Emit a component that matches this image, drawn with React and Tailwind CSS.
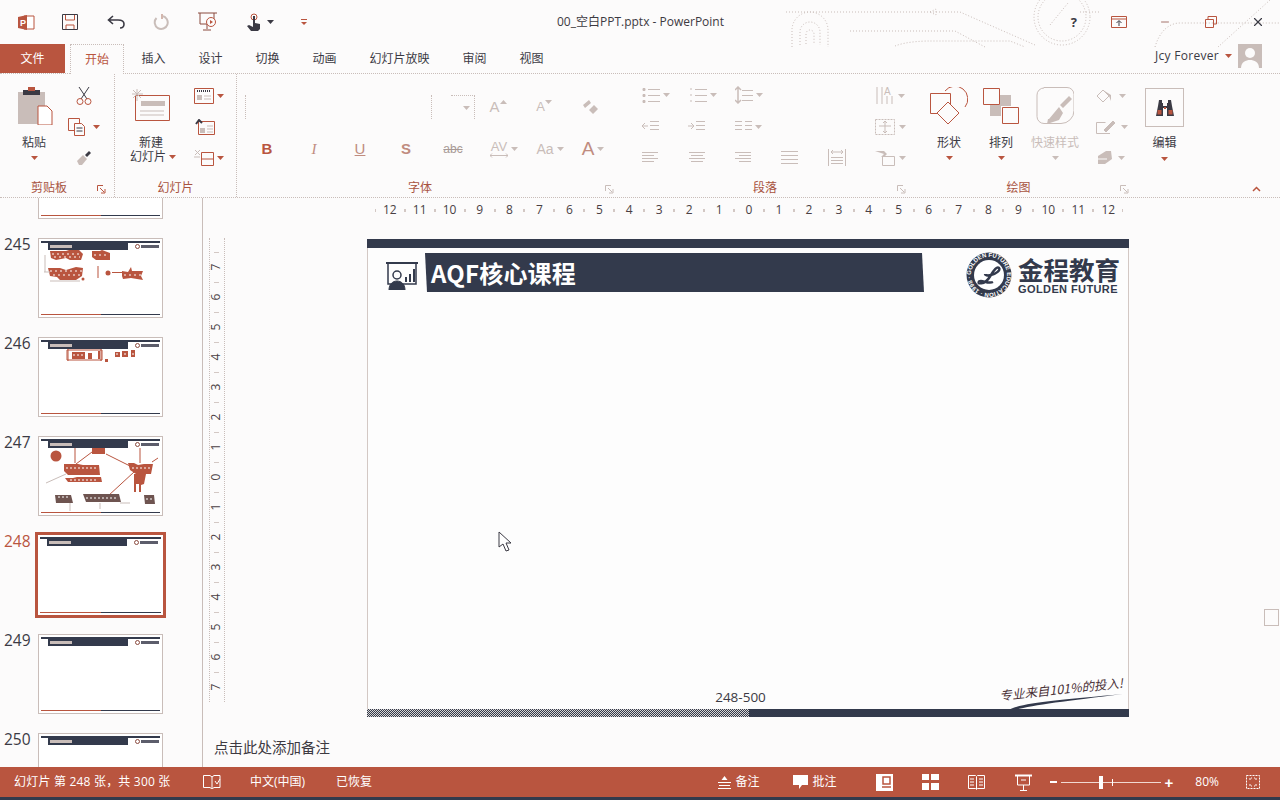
import { Minus, X } from "lucide-react";

const ACCENT = "#b9553f";
const DARK = "#333a4c";
const LINE = "#c9bdb9";

function Caret({ color = ACCENT, className = "" }) {
    return (
        <svg width="7" height="4" viewBox="0 0 7 4" className={className}>
            <path d="M0 0h7L3.5 4z" fill={color} />
        </svg>
    );
}

function Icon({ w = 16, h = 16, children }) {
    return (
        <svg width={w} height={h} viewBox={`0 0 ${w} ${h}`} fill="none" stroke={LINE} strokeWidth="1" className="shrink-0">
            {children}
        </svg>
    );
}

function Lines({ x = 0, y = 0, w = 14, n = 3, gap = 4, stroke = LINE }) {
    const rows = [];
    for (let i = 0; i < n; i++) rows.push(<path key={i} d={`M${x} ${y + i * gap + 0.5}h${w}`} stroke={stroke} />);
    return <>{rows}</>;
}

function Large({ width, icon, label, second, caret = true, dim = false }) {
    return (
        <div className="flex flex-col items-center shrink-0" style={{ width }}>
            <div className="h-[50px] flex items-center justify-center pt-[1px]">{icon}</div>
            <div className={`h-[24px] pt-[1px] leading-[24px] text-[12px] ${dim ? "text-[#c9bdb9]" : "text-[#3b3a44]"}`}>{label}</div>
            {second ? (
                <div className="h-[14px] -mt-[4px] leading-[14px] text-[12px] text-[#3b3a44] flex items-center gap-[3px] ml-[4px]">
                    {second}
                    <Caret />
                </div>
            ) : (
                caret && (
                    <div className="h-[8px] flex items-center">
                        <Caret color={dim ? LINE : ACCENT} />
                    </div>
                )
            )}
        </div>
    );
}

function Small({ children, caret, caretColor = LINE, gap = "gap-[4px]" }) {
    return (
        <div className={`h-[32px] flex items-center justify-center ${gap}`}>
            {children}
            {caret && <Caret color={caretColor} />}
        </div>
    );
}

function Launcher({ color = LINE }) {
    return (
        <svg width="9" height="9" viewBox="0 0 9 9" fill="none" stroke={color}>
            <path d="M.5 6V.5H6M3 3l4 4M4 8h4V4" />
        </svg>
    );
}

function Group({ width, children, label, labelClass = "", launcher, launcherClass = "right-[1px]", launcherColor, divider = true }) {
    return (
        <div className={`shrink-0 h-full flex flex-col ${divider ? "border-r border-dotted border-[#c9bdb9]" : ""}`} style={{ width }}>
            <div className="flex-1 flex pt-[6px] min-h-0">{children}</div>
            <div className={`h-[24px] pt-[6px] relative flex items-center justify-center text-[12px] text-[#a8533f] ${labelClass}`}>
                {label}
                {launcher && (
                    <span className={`absolute top-[12px] ${launcherClass}`}>
                        <Launcher color={launcherColor} />
                    </span>
                )}
            </div>
        </div>
    );
}

// dotted circuit drawing behind the title bar
function TitleBarArt() {
    return (
        <svg width="500" height="74" viewBox="0 0 500 74" fill="none" stroke="#c9bdb9" strokeDasharray="1 2" className="absolute right-0 top-0 pointer-events-none">
            <path d="M6 12H180L255 45" />
            <path d="M70 31H175L205 47" />
            <path d="M115 46C125 42 140 41 150 41H230L245 47" />
            <path d="M12 47V30a18 18 0 0 1 36 0V47M20 45V32a10 10 0 0 1 20 0V45M26 44V34a4 4 0 0 1 8 0V44" />
            <circle cx="282" cy="17" r="28" />
            <circle cx="282" cy="17" r="24" />
            <path d="M270 25L288 3" />
            <path d="M375 47C380 30 390 23 400 23H500" />
            <path d="M438 47L490 0" />
            <path d="M150 12l6-3v6zM300 12H320" />
        </svg>
    );
}

function QuickIcons() {
    return (
        <div className="flex items-center">
            <svg width="17" height="15" viewBox="0 0 17 15" className="ml-[18px]">
                <path d="M6 1h10v13H6z" fill="#fff" stroke={ACCENT} />
                <path d="M0 2l9-2v15l-9-2z" fill={ACCENT} />
                <text x="2" y="11" fontSize="9" fontWeight="700" fill="#fff" fontFamily="Liberation Sans, sans-serif">P</text>
            </svg>
            <svg width="16" height="16" viewBox="0 0 16 16" className="ml-[27px]" fill="none" stroke="#3b3a44">
                <path d="M.5.5h15v15H.5z" />
                <path d="M3.5 1v5h9V1M4 15v-4h8v4" stroke={ACCENT} />
            </svg>
            <svg width="19" height="14" viewBox="0 0 19 14" className="ml-[29px]" fill="none" stroke="#3b3a44" strokeWidth="1.6">
                <path d="M6 1L1.500 5 6 9M2 5h9c4 0 6 2 6 4s-1 4-4 4" />
            </svg>
            <svg width="16" height="16" viewBox="0 0 16 16" className="ml-[27px]" fill="none" stroke={LINE} strokeWidth="2">
                <path d="M9 2a6.500 6.500 0 1 1-5.500 2" />
                <path d="M9 0v5" stroke="#d3b6ad" />
            </svg>
            <svg width="20" height="20" viewBox="0 0 20 20" className="ml-[29px]" fill="none" stroke="#8a4a3f">
                <path d="M0 1h19M2 1v11h14V1M9 12v5M5 18h8" />
                <circle cx="13" cy="10" r="4.500" stroke={ACCENT} fill="#fcfbfb" />
                <path d="M12 8l3 2-3 2z" fill={ACCENT} stroke="none" />
            </svg>
            <svg width="14" height="18" viewBox="0 0 14 18" className="ml-[29px]">
                <circle cx="7" cy="4" r="3" fill="none" stroke={ACCENT} />
                <path d="M6 3h2v7l5 1v5l-2 2H4l-4-5 2-1 4 2z" fill="#3b3a44" />
            </svg>
            <Caret color="#3b3a44" className="ml-[6px]" />
            <svg width="7" height="7" viewBox="0 0 7 7" className="ml-[27px]">
                <path d="M0 .5h6" stroke={ACCENT} />
                <path d="M0 3h6L3 6z" fill={ACCENT} />
            </svg>
        </div>
    );
}

function WindowButtons() {
    return (
        <div className="flex items-center text-[#3b3a44]">
            <span className="text-[13px] font-bold leading-none text-[#3b3a44]">?</span>
            <svg width="16" height="12" viewBox="0 0 16 12" className="ml-[34px]" fill="none" stroke={ACCENT}>
                <path d="M.5.5h15v11H.5zM1 3h14" />
                <path d="M8 10V5M5.500 7L8 4.500 10.500 7" stroke="#3b3a44" />
            </svg>
            <Minus size={12} strokeWidth={1.5} className="ml-[32px]" color="#8a4a3f" />
            <svg width="12" height="12" viewBox="0 0 12 12" className="ml-[34px]" fill="none" stroke={ACCENT}>
                <path d="M3 3V.5h8.500V8H9M.5 3.500h8v8h-8z" />
            </svg>
            <X size={14} strokeWidth={2} className="ml-[34px] mr-[15px]" color="#3b3a44" />
        </div>
    );
}

function TitleBar() {
    return (
        <div className="h-[44px] relative flex items-center justify-between">
            <TitleBarArt />
            <div className="flex-1">
                <QuickIcons />
            </div>
            <div className="absolute left-0 right-0 top-0 h-[44px] flex items-center justify-center text-[12px] text-[#3d3a42] pl-[1px]">00_空白PPT.pptx - PowerPoint</div>
            <div className="relative">
                <WindowButtons />
            </div>
        </div>
    );
}

const TABS = [
    ["插入", 57],
    ["设计", 57],
    ["切换", 57],
    ["动画", 57],
    ["幻灯片放映", 93],
    ["审阅", 57],
    ["视图", 57],
];

function TabRow() {
    return (
        <div className="h-[30px] flex items-stretch relative border-b border-dotted border-[#c9bdb9] text-[12px]">
            <div className="w-[65px] bg-[#b9553f] text-white flex items-center justify-center">文件</div>
            <div className="w-[54px] ml-[5px] -mb-px bg-[#fcfbfb] border border-b-0 border-dotted border-[#c9bdb9] text-[#b9553f] flex items-center justify-center">开始</div>
            <div className="flex ml-[1px] text-[#3b3a44]">
                {TABS.map(([t, w]) => (
                    <div key={t} className="flex items-center justify-center" style={{ width: w }}>{t}</div>
                ))}
            </div>
            <div className="absolute right-[18px] -top-[3px] h-full flex items-center">
                <span className="text-[12px] text-[#3b3a44] tracking-[0.3px]">Jcy Forever</span>
                <Caret className="ml-[6px]" />
                <svg width="24" height="24" viewBox="0 0 24 24" className="ml-[6px]">
                    <rect width="24" height="24" fill="#c9bdb9" />
                    <circle cx="12" cy="9" r="5" fill="#fcfbfb" />
                    <path d="M3 24c0-6 5-8 9-8s9 2 9 8z" fill="#fcfbfb" />
                </svg>
            </div>
        </div>
    );
}

function ClipboardGroup() {
    return (
        <>
            <Large
                width={68}
                label="粘贴"
                icon={
                    <svg width="35" height="38" viewBox="0 0 35 38" className="ml-[3px]">
                        <path d="M0 5h27v32H0z" fill="#c9bdb9" />
                        <path d="M5 3h17v5H5z" fill="#3b3a44" />
                        <path d="M10 0h7v4h-7z" fill={ACCENT} />
                        <path d="M20 19h9l5 5v14H20z" fill="#fff" stroke={ACCENT} />
                    </svg>
                }
            />
            <div className="w-[46px] flex flex-col ml-[-7px]">
                <Small>
                    <svg width="16" height="18" viewBox="0 0 16 18" fill="none" stroke={ACCENT}>
                        <path d="M3 0l8 12M13 0L5 12" stroke="#3b3a44" />
                        <circle cx="4" cy="14.500" r="3" />
                        <circle cx="12" cy="14.500" r="3" />
                    </svg>
                </Small>
                <Small caret caretColor={ACCENT} gap="gap-[7px]">
                    <svg width="18" height="18" viewBox="0 0 18 18" fill="#fcfbfb" stroke={ACCENT}>
                        <path d="M.5.5h11v12H.5z" />
                        <path d="M6.500 5.500h7l3 3v9h-10z" />
                        <path d="M8.500 10h6M8.500 13h6" stroke="#3b3a44" />
                    </svg>
                </Small>
                <Small>
                    <svg width="16" height="16" viewBox="0 0 16 16">
                        <path d="M1 11l6-6 4 4-5 6H3z" fill="#c9bdb9" />
                        <path d="M9 5l4-4 2 2-4 4z" fill="#3b3a44" />
                    </svg>
                </Small>
            </div>
        </>
    );
}

function SlidesGroup() {
    return (
        <>
            <Large
                width={72}
                label="新建"
                second="幻灯片"
                icon={
                    <svg width="38" height="34" viewBox="0 0 38 34" fill="none">
                        <path d="M3.500 6.500h34v25h-34z" stroke={ACCENT} />
                        <path d="M9 12h24v5H9z" fill="#c9bdb9" />
                        <path d="M8 22h24M8 26h24" stroke="#c9bdb9" />
                        <path d="M5 0v12M0 5h11M1 1l8 8M9 1L1 9" stroke="#c9bdb9" />
                    </svg>
                }
            />
            <div className="w-[50px] flex flex-col ml-[-7px] pl-[8px]">
                <Small caret caretColor={ACCENT} gap="gap-[3px]">
                    <svg width="20" height="16" viewBox="0 0 20 16" fill="none" stroke={ACCENT}>
                        <path d="M.5.5h19v15H.5z" />
                        <path d="M3 3h14" stroke="#3b3a44" strokeWidth="2" strokeDasharray="1 1" />
                        <path d="M3 7h5v5H3z" fill="#c9bdb9" stroke="none" />
                        <path d="M10 8h7M10 11h7" stroke="#c9bdb9" />
                    </svg>
                </Small>
                <Small>
                    <svg width="20" height="16" viewBox="0 0 20 16" fill="none" stroke={ACCENT} className="mr-[9px]">
                        <path d="M3.500 2.500h16v13H3.500z" />
                        <path d="M5 9h5v5H5z" fill="#c9bdb9" stroke="none" />
                        <path d="M12 7h6M12 10h6M12 13h6" stroke="#c9bdb9" />
                        <path d="M1 5l3-4 3 3" stroke="#3b3a44" strokeWidth="2" />
                    </svg>
                </Small>
                <Small caret caretColor={ACCENT} gap="gap-[3px]">
                    <svg width="20" height="17" viewBox="0 0 20 17" fill="none">
                        <path d="M7.500 3.500h12v13h-12zM8 10h11" stroke={ACCENT} />
                        <path d="M1 1l5 5M6 1L1 6M0 8h6" stroke="#c9bdb9" />
                    </svg>
                </Small>
            </div>
        </>
    );
}

function FontLetter({ children, w, className = "", caret }) {
    return (
        <div className={`flex items-center justify-center gap-[3px] shrink-0 ${caret ? "pl-[10px]" : ""} ${className}`} style={{ width: w }}>
            {children}
            {caret && <Caret color={LINE} />}
        </div>
    );
}

function FontGroup() {
    return (
        <div className="flex flex-col w-full font-['Liberation_Sans',sans-serif]">
            <div className="h-[44px] flex pt-[10px] items-center pl-[8px] text-[#c9bdb9]">
                <span className="w-[187px] h-[24px] border-x border-dotted border-[#c9bdb9]" />
                <span className="w-[24px] h-[24px] ml-[19px] border-t border-r border-dotted border-[#c9bdb9] flex items-center justify-end pr-[4px]">
                    <Caret color={LINE} />
                </span>
                <FontLetter w={46} className="text-[15px]">
                    A<Caret color={LINE} className="mb-[10px] -ml-[3px] rotate-180" />
                </FontLetter>
                <FontLetter w={46} className="text-[13px]">
                    A<Caret color={LINE} className="mb-[10px] -ml-[3px]" />
                </FontLetter>
                <svg width="18" height="18" viewBox="0 0 18 18" className="ml-[14px]">
                    <path d="M2 7l6-5 2 3-6 5zM8 12l5-5 4 4-5 5z" fill="#c9bdb9" />
                </svg>
            </div>
            <div className="h-[32px] mt-[9px] flex items-center text-[15px] text-[#c9bdb9] pl-[7px]">
                <FontLetter w={46} className="font-bold text-[#b9553f]">B</FontLetter>
                <FontLetter w={48} className="italic font-['Liberation_Serif',serif] text-[#c08c7f]">I</FontLetter>
                <FontLetter w={44} className="underline text-[#c08c7f]">U</FontLetter>
                <FontLetter w={48} className="font-bold text-[#c08c7f]">S</FontLetter>
                <FontLetter w={46} className="line-through text-[12px] text-[#a89a96]">abc</FontLetter>
                <FontLetter w={46} className="text-[13px]" caret>
                    <span className="flex flex-col items-center leading-[12px]">
                        AV
                        <svg width="18" height="5" viewBox="0 0 18 5" fill="none" stroke={LINE}>
                            <path d="M0 2.500h18M2 .5L0 2.500l2 2M16 .5l2 2-2 2" />
                        </svg>
                    </span>
                </FontLetter>
                <FontLetter w={46} className="text-[14px]" caret>Aa</FontLetter>
                <FontLetter w={40} className="text-[19px] text-[#c08c7f]" caret>A</FontLetter>
            </div>
        </div>
    );
}

function ParagraphGroup() {
    const listIcon = (num) => (
        <Icon w={18} h={16}>
            <path d={num ? "M1 2h2M1 8h2M1 14h2" : "M1 1.500h2v2H1zM1 7.500h2v2H1zM1 13.500h2v2H1z"} fill={LINE} />
            <Lines x={6} y={2} w={12} gap={6} />
        </Icon>
    );
    const alignIcon = (x1, w1) => (
        <Icon w={16} h={11}>
            <path d={`M0 .5h16M${x1} 3.500h${w1}M0 6.500h16M${x1} 9.500h${w1}`} />
        </Icon>
    );
    return (
        <div className="flex flex-col w-full pl-[27px]">
            <div className="h-[32px] mt-[-1px] flex items-center">
                <div className="w-[47px] flex items-center gap-[3px]">{listIcon(false)}<Caret color={LINE} /></div>
                <div className="w-[46px] flex items-center gap-[3px]">{listIcon(true)}<Caret color={LINE} /></div>
                <div className="flex items-center gap-[3px]">
                    <Icon w={18} h={18}>
                        <path d="M3 1v16M0 4l3-3 3 3M0 14l3 3 3-3" strokeWidth="1.5" />
                        <Lines x={7} y={4} w={11} gap={5} />
                    </Icon>
                    <Caret color={LINE} />
                </div>
            </div>
            <div className="h-[32px] mt-[1px] flex items-center">
                <div className="w-[46px]">
                    <Icon w={17} h={12}>
                        <path d="M8 .5h9M8 4.500h9M8 8.500h9M0 5h6M3 2L0 5l3 3" />
                    </Icon>
                </div>
                <div className="w-[47px]">
                    <Icon w={17} h={12}>
                        <path d="M8 .5h9M8 4.500h9M8 8.500h9M0 5h6M3 2l3 3-3 3" />
                    </Icon>
                </div>
                <div className="flex items-center gap-[3px]">
                    <Icon w={17} h={12}>
                        <path d="M0 .5h7M10 .5h7M0 4.500h7M10 4.500h7M0 8.500h7M10 8.500h7" />
                    </Icon>
                    <Caret color={LINE} />
                </div>
            </div>
            <div className="h-[32px] flex items-center">
                <div className="w-[47px]">{alignIcon(0, 12)}</div>
                <div className="w-[46px]">{alignIcon(2, 12)}</div>
                <div className="w-[46px]">{alignIcon(4, 12)}</div>
                <div className="w-[47px]">
                    <Icon w={17} h={15}>
                        <Lines y={1} w={17} n={4} gap={4} />
                    </Icon>
                </div>
                <Icon w={18} h={17}>
                    <path d="M.5 0v17M17.500 0v17M4 3h10M5 1L3 3l2 2M13 1l2 2-2 2" />
                    <Lines x={3} y={8} w={12} gap={3} />
                </Icon>
            </div>
        </div>
    );
}

function DrawingGroup() {
    return (
        <>
            <div className="w-[52px] shrink-0 flex flex-col items-start pl-[4px] ml-[-36px]">
                <Small caret>
                    <Icon w={19} h={20}>
                        <path d="M2 1v17M7 1v17M12 10v8M17 10v8" />
                        <text x="9" y="9" fontSize="10" fill={LINE} stroke="none" fontFamily="Liberation Sans, sans-serif">A</text>
                    </Icon>
                </Small>
                <Small caret>
                    <Icon w={20} h={16}>
                        <path d="M.5.5h19v15H.5z" strokeDasharray="2 1" />
                        <path d="M10 2v12M8 4l2-2 2 2M8 12l2 2 2-2M4 7h12" />
                    </Icon>
                </Small>
                <Small caret>
                    <Icon w={20} h={16}>
                        <path d="M0 1h9l3 3-3 3 3 0H6l3-3z" fill={LINE} stroke="none" />
                        <path d="M7.500 6.500h12v9h-12z" />
                    </Icon>
                </Small>
            </div>
            <Large
                width={52}
                label="形状"
                icon={
                    <svg width="38" height="38" viewBox="0 0 38 38" fill="none" stroke={ACCENT}>
                        <path d="M15 4a12 12 0 1 1 20 16" />
                        <path d="M.5 6.500h20v20H.5z" />
                        <path d="M18 15l11 11-11 11L7 26z" fill="#fcfbfb" />
                    </svg>
                }
            />
            <Large
                width={52}
                label="排列"
                icon={
                    <svg width="36" height="36" viewBox="0 0 36 36" fill="none" stroke={ACCENT}>
                        <path d="M17 7h11v11H17zM7 17h11v11H7z" fill="#c9bdb9" stroke="none" />
                        <path d="M.5.5h16v16H.5zM19.500 19.500h16v16h-16z" fill="#fcfbfb" />
                    </svg>
                }
            />
            <Large
                width={56}
                label="快速样式"
                dim
                icon={
                    <svg width="38" height="38" viewBox="0 0 38 38" fill="none" stroke={LINE}>
                        <path d="M8 .5h23a7 7 0 0 1 7 7v16a13 13 0 0 1-13 13H8a7 7 0 0 1-7-7V8a7 7 0 0 1 7-7z" fill="#fcfbfb" />
                        <path d="M36 12l-9 9-3-3 9-9zM23 20l-10 12H12l-1 5 12-4 4-7z" fill={LINE} stroke="none" />
                    </svg>
                }
            />
            <div className="w-[44px] shrink-0 flex flex-col items-start pl-[13px]">
                <Small caret gap="gap-[8px]">
                    <svg width="15" height="16" viewBox="0 0 15 16">
                        <path d="M1 8l6-6 6 6-6 6z" fill="none" stroke={LINE} />
                        <path d="M7 2l6 6 2 5V7z" fill={LINE} />
                    </svg>
                </Small>
                <Small caret gap="gap-[5px]">
                    <svg width="20" height="15" viewBox="0 0 20 15" fill="none" stroke={LINE}>
                        <path d="M14 14.500H.5v-11h9" />
                        <path d="M8 11l9-9 2 2-9 9z" fill={LINE} />
                    </svg>
                </Small>
                <Small caret gap="gap-[5px]">
                    <svg width="17" height="15" viewBox="0 0 17 15">
                        <path d="M2 6l8-5h5l1 8-7 5H2z" fill={LINE} />
                        <path d="M1 9l10 0" stroke="#fcfbfb" />
                    </svg>
                </Small>
            </div>
        </>
    );
}

function EditGroup() {
    return (
        <div className="pl-[15px] flex flex-col items-center w-[54px]">
            <div className="w-[39px] h-[39px] mt-[8px] border border-[#c9bdb9] flex items-center justify-center">
                <svg width="18" height="16" viewBox="0 0 18 16">
                    <path d="M3 0h3v3h1v3h4V3h1V0h3l1 6 2 10h-7V8H7v8H0l2-10z" fill="#3b3a44" />
                    <path d="M1.500 10h4v4.500h-4zM12.500 10h4v4.500h-4z" fill={ACCENT} />
                    <path d="M8 7h2v2H8z" fill={ACCENT} />
                </svg>
            </div>
            <div className="h-[24px] leading-[24px] mt-[4px] text-[12px] text-[#3b3a44] whitespace-nowrap">编辑</div>
            <div className="h-[8px] flex items-center">
                <Caret />
            </div>
        </div>
    );
}

function Ribbon() {
    return (
        <div className="h-[124px] flex border-b border-dotted border-[#c9bdb9] relative">
            <Group width={115} label="剪贴板" labelClass="pr-[16px]" launcher launcherClass="right-[8px]" launcherColor={ACCENT}>
                <ClipboardGroup />
            </Group>
            <Group width={122} label="幻灯片">
                <SlidesGroup />
            </Group>
            <Group width={378} label="字体" labelClass="pr-[12px]" launcher divider={false}>
                <FontGroup />
            </Group>
            <Group width={292} label="段落" labelClass="pl-[8px]" launcher divider={false}>
                <ParagraphGroup />
            </Group>
            <Group width={223} label="绘图" launcher divider={false}>
                <DrawingGroup />
            </Group>
            <div className="flex-1 pt-[6px]">
                <EditGroup />
            </div>
            <svg width="9" height="6" viewBox="0 0 9 6" fill="none" stroke={ACCENT} strokeWidth="1.5" className="absolute right-[19px] bottom-[5px]">
                <path d="M1 5l3.500-3.500L8 5" />
            </svg>
        </div>
    );
}

// coarse copies of the tiny slide pictures; white dashes break the fills up like the reference
function ThumbBlobs({ kind }) {
    if (kind === 245) {
        return (
            <svg width="122" height="50" viewBox="0 0 122 50" fill={ACCENT} className="block">
                <path d="M10 1h16l3-1h10l4 4-2 6H30l-4-2-10 2-5-2zM52 1h8l2-1 8 3v7H56l-4-3z" />
                <path d="M8 18h12l6 2 10-3 7 1-1 8-6 4H20l-3-3-7-1zM82 21l6 1 3-5 1 4h11l-2 5 2 4-12-2-8 1-1-3z" />
                <circle cx="68" cy="23" r="2.500" />
                <circle cx="43" cy="29" r="1.500" />
                <path d="M57.500 16h1v12h-1zM72 22h10v1H72zM4 4v18" />
                <path d="M5 5v17M4 22h6M10 31h30" stroke={LINE} fill="none" />
                <path d="M12 4h30M14 7h26M54 5h14M10 21h32M13 25h28M84 25h18" stroke="#fff" strokeDasharray="2 3" fill="none" />
            </svg>
        );
    }
    if (kind === 246) {
        return (
            <svg width="122" height="50" viewBox="0 0 122 50" fill={ACCENT} className="block">
                <path d="M32 3h13v7H32zM48 4h4v6h-4zM58 2h2v8h-2zM65 10h3v3h-3zM75 3h5v5h-5zM82 2h6v6h-6zM91 1h4v7h-4z" />
                <path d="M27 1h35v10H27zM28 0v12M61 0v12" fill="none" stroke={ACCENT} />
                <path d="M33 6h11M76 5h18" stroke="#fff" strokeDasharray="2 2" fill="none" />
            </svg>
        );
    }
    if (kind === 247) {
        return (
            <svg width="122" height="66" viewBox="0 0 122 66" fill={ACCENT} className="block">
                <circle cx="16" cy="8" r="5.500" />
                <path d="M24 16h14l5 1h16l1 10H28l-4-4zM25 30h8l4-1h24l1 5H28zM52 0h13v6H52zM88 15h6l4 2 6-1 9 0-2 10H96l-6-4zM94 26h12l-2 10-3 1v7h-2v-8h-3v8h-2z" />
                <path d="M35 0v15M36 16L52 4M66 6l24 12M68 48l26-24M100 0v15M112 14l6-4" fill="none" stroke={ACCENT} />
                <path d="M15 47h16l2 8H16zM43 46h36l2 8H46zM104 47h10l1 9h-10z" fill="#6e5450" />
                <path d="M18 49h12M46 50h32M106 51h8M26 20h30M30 32h28M92 20h18" stroke="#fff" strokeDasharray="2 2" fill="none" />
                <path d="M6 35l20-9M30 55v8M60 55v6M80 55h10" stroke={LINE} fill="none" />
            </svg>
        );
    }
    return null;
}

function Thumb({ num, blobs, selected }) {
    return (
        <div className={`h-[80px] flex relative ${selected ? "text-[#b9553f]" : "text-[#3b3a44]"}`}>
            <div className="w-[38px] text-[15.5px] leading-[12px] pl-[4px] font-['Open_Sans',sans-serif]">{num}</div>
            <div className={`w-[125px] h-[80px] bg-white flex flex-col px-[1px] py-[1px] ${selected ? "outline-3 outline-[#b9553f]" : "border border-[#c9bdb9]"}`}>
                <div className="h-[2px] mt-[1px] mx-[1px] bg-[#333a4c]" />
                <div className="h-[7px] flex items-center">
                    <div className="h-[7px] w-[80px] ml-[8px] bg-[#333a4c] flex items-center pl-[2px]">
                        <div className="h-[3px] w-[22px] bg-[#c9bdb9]" />
                    </div>
                    <div className="w-[5px] h-[5px] ml-[7px] rounded-full border border-[#8a4a3f]" />
                    <div className="h-[3px] w-[18px] ml-[1px] bg-[#5c5d6b]" />
                </div>
                <div className="flex-1 min-h-0 overflow-hidden">
                    <ThumbBlobs kind={blobs} />
                </div>
                <div className="h-[1px] mb-[1px] mx-[1px] flex shrink-0">
                    <div className="w-1/2 bg-[#b9553f]" />
                    <div className="w-1/2 bg-[#333a4c]" />
                </div>
            </div>
        </div>
    );
}

function ThumbPanel() {
    return (
        <div className="w-[203px] shrink-0 h-full overflow-hidden border-r border-[#c9bdb9]">
            <div className="flex flex-col gap-[19px] mt-[-59px]">
                <Thumb />
                <Thumb num="245" blobs={245} />
                <Thumb num="246" blobs={246} />
                <Thumb num="247" blobs={247} />
                <Thumb num="248" selected />
                <Thumb num="249" />
                <Thumb num="250" />
            </div>
        </div>
    );
}

const HRULER = [12, 11, 10, 9, 8, 7, 6, 5, 4, 3, 2, 1, 0, 1, 2, 3, 4, 5, 6, 7, 8, 9, 10, 11, 12];
const VRULER = [7, 6, 5, 4, 3, 2, 1, 0, 1, 2, 3, 4, 5, 6, 7];

function TopRuler() {
    return (
        <div className="h-[16px] flex justify-center items-center text-[12px] text-[#4a3f44] font-['Open_Sans',sans-serif]">
            {HRULER.map((n, i) => (
                <div key={i} className="w-[29.95px] flex items-center justify-between">
                    <span className="w-[1px] h-[3px] bg-[#d3c8c4]" />
                    <span className="leading-[16px]">{n}</span>
                    <span className="w-[1px] h-[3px] bg-[#d3c8c4]" />
                </div>
            ))}
        </div>
    );
}

function SideRuler() {
    return (
        <div className="w-[26px] shrink-0 flex flex-col items-center pt-[40px] text-[12px] text-[#4a3f44] font-['Open_Sans',sans-serif]">
            <div className="w-[16px] flex flex-col items-center pt-[14px] border-x border-dotted border-[#c9bdb9] ml-[1px]">
                {VRULER.map((n, i) => (
                    <div key={i} className="h-[30px] flex flex-col justify-between items-center">
                        <span className="w-[5px] h-[1px] bg-[#d3c8c4]" />
                        <span className="-rotate-90 leading-none">{n}</span>
                        <span className="w-[5px] h-[1px] bg-transparent" />
                    </div>
                ))}
            </div>
        </div>
    );
}

function SlideLogo() {
    return (
        <div className="flex items-center gap-[6px] text-[#333a4c] -mt-[1px]">
            <svg width="46" height="46" viewBox="0 0 46 46" className="shrink-0">
                <circle cx="23" cy="23" r="22.500" fill={DARK} />
                <circle cx="23" cy="23" r="15" fill="#fff" />
                <defs>
                    <path id="ring" d="M23 23m-18 0a18 18 0 1 1 36 0a18 18 0 1 1-36 0" />
                </defs>
                <text fontSize="6" fontWeight="700" fill="#fff" fontFamily="Liberation Sans, sans-serif">
                    <textPath href="#ring">GOLDEN FUTURE EDUCATION · 1998 ·</textPath>
                </text>
                <path d="M14 31c4 1 8-3 11-8s6-9 8-7-3 6-8 7c-4 1-6 0-6-1M14 31c-2 1-2-2 1-2s8 3 12 1" fill="none" stroke={DARK} strokeWidth="2.500" />
            </svg>
            <div className="flex flex-col w-[102px]">
                <div className="text-[25.5px] leading-[28px] font-bold whitespace-nowrap font-['Noto_Sans_CJK_SC',sans-serif]">金程教育</div>
                <div className="text-[11px] leading-[13px] font-bold tracking-[0.4px] whitespace-nowrap font-['Liberation_Sans',sans-serif]">GOLDEN FUTURE</div>
            </div>
        </div>
    );
}

function Slide() {
    return (
        <div className="w-[762px] h-[478px] shrink-0 bg-[#fdfdfd] border-x border-[#d3c8c4] flex flex-col">
            <div className="h-[9px] bg-[#333a4c] -mx-px" />
            <div className="h-[48px] flex items-start pt-[5px]">
                <svg width="32" height="28" viewBox="0 0 32 28" className="ml-[18px] mt-[9px] shrink-0" fill="none" stroke={DARK}>
                    <path d="M0 1h32" strokeWidth="2" />
                    <path d="M2 2v20h28V2" strokeWidth="1.5" />
                    <circle cx="11" cy="13" r="4" strokeWidth="1.5" />
                    <path d="M3 28c0-6 4-9 8-9s8 3 8 9z" fill={DARK} />
                    <path d="M20 20v-5M24 20v-8M28 20V7" strokeWidth="2" />
                </svg>
                <div className="ml-[7px] w-[499px] h-[39px] bg-[#333a4c] [clip-path:polygon(0_0,99.6%_0,100%_100%,0.4%_100%)] text-white text-[24px] tracking-[0.2px] font-bold leading-[39px] pl-[6px] font-['Noto_Sans_CJK_SC',sans-serif]">
                    AQF核心课程
                </div>
                <div className="ml-[42px]">
                    <SlideLogo />
                </div>
            </div>
            <div className="flex-1" />
            <div className="h-[23px] relative flex items-center justify-center text-[13.5px] text-[#3b3a44] font-['Open_Sans',sans-serif] pr-[15px] pb-[1px]">
                248-500
                <div className="absolute right-[3px] bottom-[-3px] w-[128px] h-[34px]">
                    <div className="italic text-[12.5px] leading-[16px] whitespace-nowrap text-[#4a3036] -rotate-[6deg] pt-[3px] pl-[2px] font-['Noto_Sans_CJK_SC',sans-serif]">专业来自101%的投入!</div>
                    <svg width="128" height="20" viewBox="0 0 128 20" className="absolute left-0 bottom-0">
                        <path d="M11 18C24 11 60 8 126 2C70 9 35 13 18 18Z" fill={DARK} />
                    </svg>
                </div>
            </div>
            <div className="h-[8px] flex -mx-px">
                <div className="w-[382px] bg-[repeating-conic-gradient(#333a4c_0_25%,#d8d4d2_0_50%)] bg-[length:2px_2px]" />
                <div className="flex-1 bg-[#333a4c]" />
            </div>
        </div>
    );
}

function Cursor() {
    return (
        <svg width="14" height="21" viewBox="0 0 14 21" className="absolute left-[295px] top-[333px]">
            <path d="M1 1v15l4-3 3 7 3-1-3-7h5z" fill="#fff" stroke="#3b3a44" />
        </svg>
    );
}

function Editor() {
    return (
        <div className="flex-1 min-w-0 flex flex-col h-full relative">
            <div className="flex-1 min-h-0 flex">
                <SideRuler />
                <div className="flex-1 min-w-0 flex flex-col relative pr-[15px]">
                    <div className="pt-[4px] ml-[-2px] pl-[21px]">
                        <TopRuler />
                    </div>
                    <div className="flex justify-start pl-[138px] pt-[21px]">
                        <Slide />
                    </div>
                    <div className="flex-1" />
                </div>
                <div className="w-[15px] shrink-0 flex flex-col justify-start pt-[411px] -ml-px mr-px [background-image:linear-gradient(#fcfbfb,#fcfbfb),radial-gradient(circle_at_1px_1px,#dcd3d0_0.6px,transparent_0.7px)] [background-size:100%_330px,3px_3px] [background-repeat:no-repeat,repeat]">
                    <div className="h-[17px] border border-[#c9bdb9] bg-[#fcfbfb]" />
                </div>
            </div>
            <div className="h-[30px] shrink-0 flex items-center pl-[11px] pb-[8px] text-[14.5px] text-[#3d3a42]">点击此处添加备注</div>
            <Cursor />
        </div>
    );
}

function StatusBar() {
    return (
        <div className="h-[33px] shrink-0 bg-[#333a4c] text-[12px] text-white">
            <div className="h-[30px] bg-[#b9553f] flex items-center">
                <span className="ml-[14px] w-[170px] whitespace-nowrap tracking-[0.2px]">幻灯片 第 248 张，共 300 张</span>
                <svg width="18" height="14" viewBox="0 0 18 14" fill="none" stroke="#fff" className="ml-[19px]">
                    <path d="M9 2L7 .5H.5v12H7L9 14l2-1.500h6V.5h-6zM9 2v11M12 6l2 3 3-5" />
                </svg>
                <span className="ml-[29px]">中文(中国)</span>
                <span className="ml-[31px]">已恢复</span>
                <div className="flex-1" />
                <div className="flex items-center">
                    <svg width="13" height="13" viewBox="0 0 13 13" fill="#fff">
                        <path d="M6.500 0l3 4h-6zM0 6h13v1H0zM1 9h11v1H1zM0 12h13v1H0z" />
                    </svg>
                    <span className="ml-[5px]">备注</span>
                    <svg width="15" height="14" viewBox="0 0 15 14" fill="#fff" className="ml-[33px]">
                        <path d="M0 0h15v10H9l-3 4v-4H0z" />
                    </svg>
                    <span className="ml-[5px]">批注</span>
                    <svg width="17" height="17" viewBox="0 0 17 17" className="ml-[39px]" fill="none" stroke="#fff">
                        <rect width="17" height="17" fill="#fff" stroke="none" />
                        <path d="M7 3h7v7H7zM6 13h9" stroke={ACCENT} strokeWidth="1.5" />
                    </svg>
                    <svg width="17" height="16" viewBox="0 0 17 16" fill="#fff" className="ml-[29px]">
                        <path d="M0 0h7v6H0zM9 0h8v6H9zM0 9h7v7H0zM9 9h8v7H9z" />
                    </svg>
                    <svg width="17" height="15" viewBox="0 0 17 15" fill="none" stroke="#fff" className="ml-[29px]">
                        <path d="M.5.5h7l1 1 1-1h7v13h-7l-1 1-1-1h-7zM8.500 2v12M2 4h4M2 7h4M2 10h4M11 4h4M11 7h4M11 10h4" />
                    </svg>
                    <svg width="17" height="17" viewBox="0 0 17 17" fill="none" stroke="#fff" className="ml-[30px]">
                        <path d="M0 1.500h17" strokeWidth="2" />
                        <path d="M2.500 2v9h12V2M8.500 11v5M5 16.500h7M6 6h5" />
                    </svg>
                    <span className="ml-[18px] w-[7px] h-[2px] bg-white" />
                    <div className="ml-[4px] w-[100px] h-[1px] bg-[#f1d9d2] relative">
                        <span className="absolute left-[38px] top-[-6px] w-[4px] h-[13px] bg-white" />
                        <span className="absolute left-[51px] top-[-3px] w-[1px] h-[7px] bg-white" />
                    </div>
                    <span className="ml-[4px] text-[15px] font-bold leading-none font-['Liberation_Sans',sans-serif]">+</span>
                    <span className="ml-[22px]">80%</span>
                    <svg width="14" height="14" viewBox="0 0 14 14" fill="none" stroke="#fff" className="ml-[27px] mr-[20px]">
                        <path d="M.5.5h13v13H.5zM4 5V3h2M10 5V3H8M4 9v2h2M10 9v2H8" strokeDasharray="2 1" />
                    </svg>
                </div>
            </div>
        </div>
    );
}

export default function App() {
    return (
        <div className="w-[1280px] h-[800px] overflow-hidden bg-[#fcfbfb] flex flex-col font-['Open_Sans','Noto_Sans_CJK_SC',sans-serif]">
            <TitleBar />
            <TabRow />
            <Ribbon />
            <div className="h-[569px] flex [background-image:linear-gradient(#fcfbfb,#fcfbfb),radial-gradient(circle_at_1px_1px,#dcd3d0_0.6px,transparent_0.7px)] [background-size:100%_455px,3px_3px] [background-repeat:no-repeat,repeat]">
                <ThumbPanel />
                <Editor />
            </div>
            <StatusBar />
        </div>
    );
}
